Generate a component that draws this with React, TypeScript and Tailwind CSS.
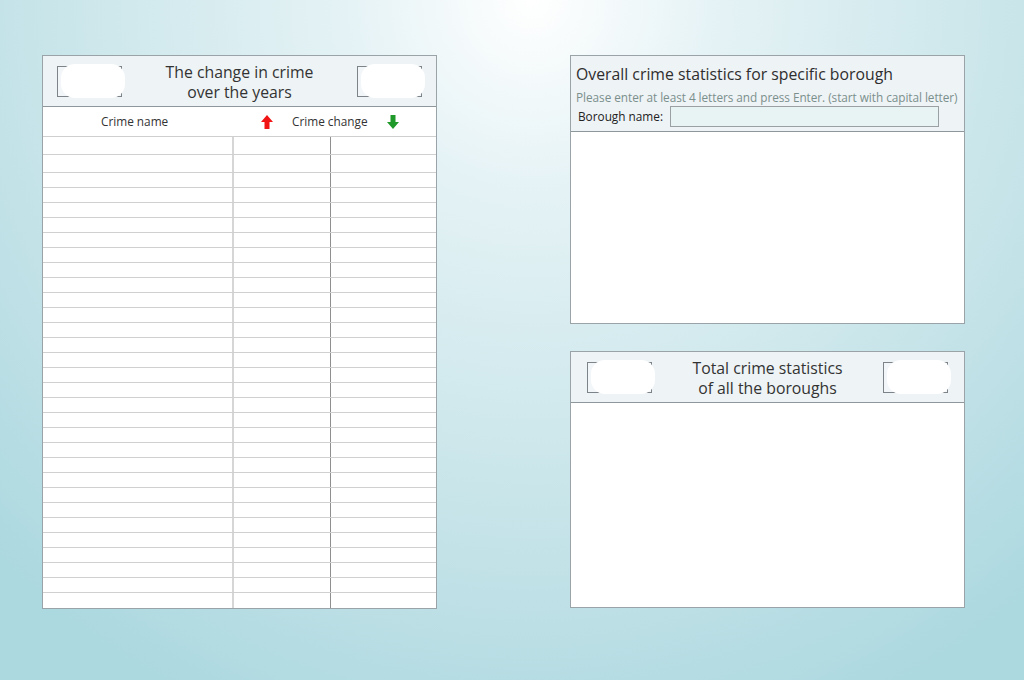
import React from "react";

const ROWS = Array.from({ length: 31 }, (_, i) => (i < 2 ? 18 : 15));

function RedactedBox() {
  return (
    <div className="relative w-[65px] h-[31px] border border-[#7d8489] bg-[#f2f6f8]">
      <div className="absolute left-[3px] right-[-4px] top-[-3px] bottom-[-2px] rounded-[14px] bg-white" />
    </div>
  );
}

function UpArrow() {
  return (
    <svg width="12" height="14" viewBox="0 0 12 14">
      <path d="M6 0 L12 7 L8.5 7 L8.5 14 L3.5 14 L3.5 7 L0 7 Z" fill="#f01414" />
    </svg>
  );
}

function DownArrow() {
  return (
    <svg width="12" height="14" viewBox="0 0 12 14">
      <path d="M3.5 0 L8.5 0 L8.5 7 L12 7 L6 14 L0 7 L3.5 7 Z" fill="#1f9a2a" />
    </svg>
  );
}

export default function App() {
  return (
    <div
      className="w-full h-[680px] overflow-hidden bg-[radial-gradient(ellipse_75%_115%_at_52%_0%,#ffffff_0%,#e4f2f5_25%,#cfe8ec_55%,#bcdfe5_80%,#acd8e0_100%)] text-[#2e2e2e]"
      style={{ fontFamily: '"Open Sans", "Noto Sans", sans-serif' }}
    >
      <div className="flex pl-[42px] pt-[55px] gap-[133px]">
        {/* Left: change in crime table */}
        <div className="w-[395px] h-[554px] border border-[#9aa3a8] bg-white flex flex-col">
          <div className="h-[51px] bg-[#eef3f6] border-b border-[#8e979c] flex items-center justify-between px-[14px]">
            <RedactedBox />
            <div className="text-center text-[15.8px] leading-[20px] text-[#333] pt-[2px]">
              <div>The change in crime</div>
              <div>over the years</div>
            </div>
            <RedactedBox />
          </div>
          <div className="h-[30px] flex items-center text-[11.8px] text-[#333] border-b border-[#cfcfcf]">
            <div className="w-[218px] pl-[58px]">Crime name</div>
            <UpArrow />
            <div className="ml-[19px]">Crime change</div>
            <div className="ml-[19px]">
              <DownArrow />
            </div>
          </div>
          <div className="flex-1 flex flex-col">
            {ROWS.map((h, i) => (
              <div key={i} className="flex border-b border-[#d0d0d0] last:border-b-0" style={{ height: h }}>
                <div className="w-[191px] border-r-2 border-[#d6d6d6]" />
                <div className="w-[97px] border-r border-[#8f8f8f]" />
                <div className="flex-1" />
              </div>
            ))}
          </div>
        </div>

        {/* Right column */}
        <div className="flex flex-col gap-[27px]">
          <div className="w-[395px] h-[269px] border border-[#9aa3a8] bg-white flex flex-col">
            <div className="h-[76px] bg-[#eef3f6] border-b border-[#8e979c] px-[5px] pt-[7px]">
              <div className="text-[15.8px] leading-[22px] text-[#2e2e2e]">Overall crime statistics for specific borough</div>
              <div className="text-[11.8px] leading-[14px] mt-[5px] text-[#7b908c] whitespace-nowrap tracking-[-0.05px]">
                Please enter at least 4 letters and press Enter. (start with capital letter)
              </div>
              <div className="flex items-center mt-[2px] pl-[2px]">
                <span className="text-[11.8px] text-[#222] w-[92px]">Borough name:</span>
                <div className="w-[269px] h-[21px] border border-[#9aa0a3] bg-[#e8f3f4]" />
              </div>
            </div>
          </div>

          <div className="w-[395px] h-[257px] border border-[#9aa3a8] bg-white flex flex-col">
            <div className="h-[51px] bg-[#eef3f6] border-b border-[#8e979c] flex items-center justify-between px-[16px]">
              <RedactedBox />
              <div className="text-center text-[15.8px] leading-[20px] text-[#333] pt-[2px]">
                <div>Total crime statistics</div>
                <div>of all the boroughs</div>
              </div>
              <RedactedBox />
            </div>
          </div>
        </div>
      </div>
    </div>
  );
}
